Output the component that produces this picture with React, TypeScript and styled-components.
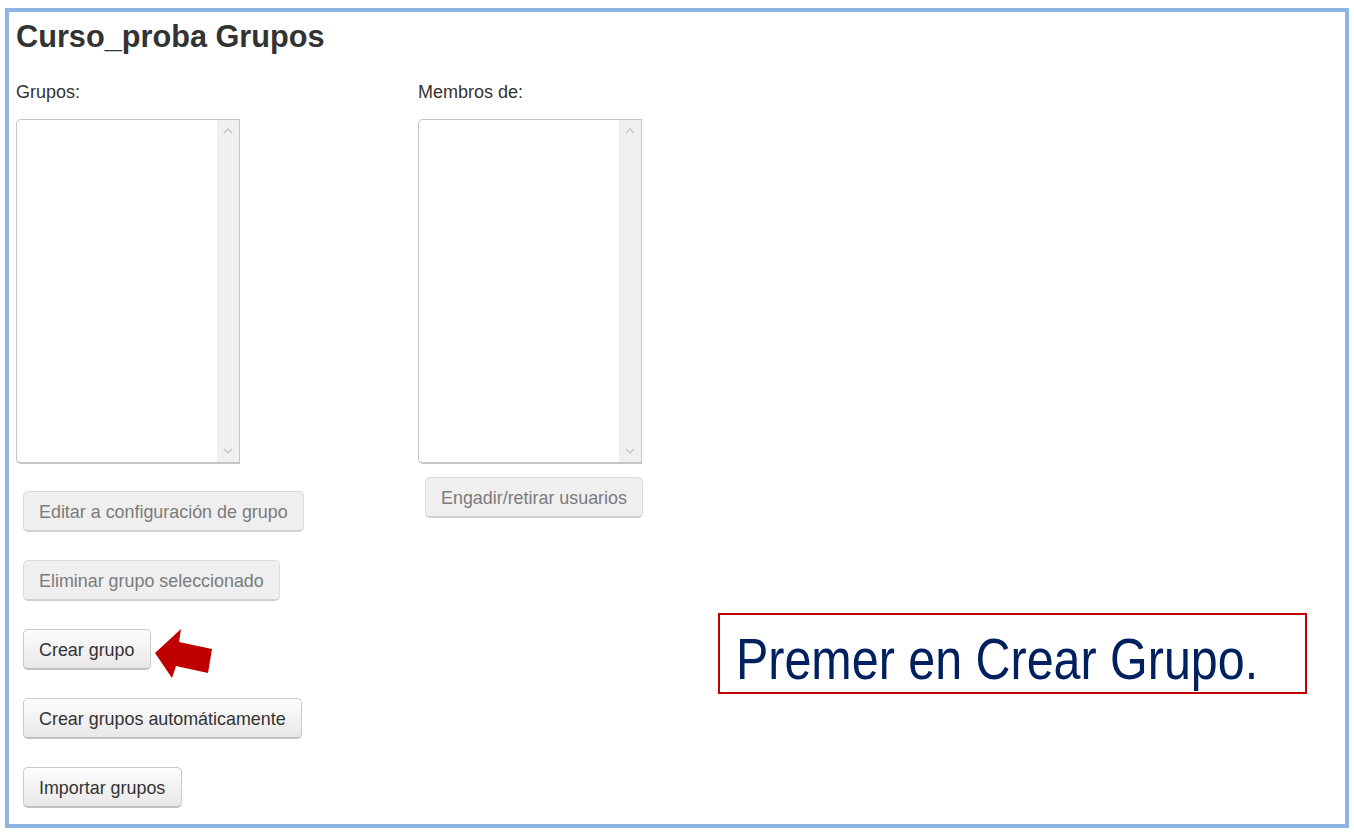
import styled, { createGlobalStyle } from "styled-components";

const GlobalStyle = createGlobalStyle`
  html, body {
    margin: 0;
    padding: 0;
    background: #fff;
    font-family: "Liberation Sans", Arial, sans-serif;
  }
`;

const Frame = styled.div`
  box-sizing: border-box;
  width: 1344px;
  height: 820px;
  margin: 8px 0 0 5px;
  padding: 8px 7px 0;
  border: 4px solid #8db4e2;
  color: #333;
  overflow: hidden;
`;

const Title = styled.h2`
  margin: 0;
  height: 34px;
  font-size: 30.7px;
  line-height: 33px;
  font-weight: 700;
  color: #333;
`;

const Columns = styled.div`
  display: flex;
  margin-top: 28px;
`;

const Column = styled.div<{ $width: number }>`
  width: ${(p) => p.$width}px;
  flex: none;
`;

const Label = styled.div`
  height: 21px;
  font-size: 18px;
  line-height: 21px;
  margin-bottom: 16px;
`;

const ListBox = styled.div`
  box-sizing: border-box;
  width: 224px;
  height: 345px;
  display: flex;
  justify-content: flex-end;
  border: 1px solid #c6c6c6;
  border-radius: 5px 0 0 5px;
  border-bottom-width: 2px;
  background: #fff;
`;

const ScrollBar = styled.div`
  width: 22px;
  background: #f0f0f0;
  display: flex;
  flex-direction: column;
  justify-content: space-between;
  align-items: center;
  padding: 8px 0;
  color: #c4c4c4;
`;

const Actions = styled.div<{ $top: number }>`
  display: flex;
  flex-direction: column;
  align-items: flex-start;
  gap: 28px;
  margin: ${(p) => p.$top}px 0 0 7px;
`;

const Action = styled.button`
  box-sizing: border-box;
  height: 41px;
  padding: 2px 15.5px 0 15px;
  border: 1px solid #cacaca;
  border-bottom: 2px solid #c0c0c0;
  border-radius: 5px;
  font-family: inherit;
  font-size: 17.9px;
  line-height: 36px;
  white-space: nowrap;
  color: #333;
  background: linear-gradient(#fdfdfd, #e8e8e8);
  &:disabled {
    background: #efefef;
    color: #7b7b7b;
    border-color: #dadada;
    border-bottom-color: #d0d0d0;
  }
`;

const ArrowRow = styled.div`
  display: flex;
  align-items: flex-start;
  gap: 4px;
  height: 41px;
`;

const Arrow = styled.svg`
  display: block;
  width: 58px;
  height: 50px;
  flex: none;
`;

const NoteColumn = styled.div`
  flex: none;
  padding-top: 531px;
  margin-left: 76px;
`;

const Note = styled.div`
  box-sizing: border-box;
  width: 589px;
  height: 81px;
  padding-left: 16px;
  border: 2px solid #c00000;
  color: #002060;
  overflow: hidden;
`;

const NoteText = styled.span`
  display: inline-block;
  font-size: 58px;
  line-height: 88px;
  white-space: nowrap;
  transform: scaleX(0.835);
  transform-origin: left center;
`;

const Chevron = ({ down }: { down?: boolean }) => (
  <svg width="10" height="6" viewBox="0 0 10 6" fill="none" stroke="currentColor" strokeWidth="1.4">
    <path d={down ? "M1 1l4 4 4-4" : "M1 5l4-4 4 4"} />
  </svg>
);

const Select = () => (
  <ListBox>
    <ScrollBar>
      <Chevron />
      <Chevron down />
    </ScrollBar>
  </ListBox>
);

export default function App() {
  return (
    <>
      <GlobalStyle />
      <Frame>
        <Title>Curso_proba Grupos</Title>
        <Columns>
          <Column $width={402}>
            <Label>Grupos:</Label>
            <Select />
            <Actions $top={27}>
              <Action disabled>Editar a configuración de grupo</Action>
              <Action disabled>Eliminar grupo seleccionado</Action>
              <ArrowRow>
                <Action>Crear grupo</Action>
                <Arrow viewBox="0 0 58 50">
                  <path d="M0 24 L26 0 L24 13 L57 20 L53 44 L21 37 L17 49 Z" fill="#c00000" />
                </Arrow>
              </ArrowRow>
              <Action>Crear grupos automáticamente</Action>
              <Action>Importar grupos</Action>
            </Actions>
          </Column>
          <Column $width={224}>
            <Label>Membros de:</Label>
            <Select />
            <Actions $top={13}>
              <Action disabled>Engadir/retirar usuarios</Action>
            </Actions>
          </Column>
          <NoteColumn>
            <Note>
              <NoteText>Premer en Crear Grupo.</NoteText>
            </Note>
          </NoteColumn>
        </Columns>
      </Frame>
    </>
  );
}
